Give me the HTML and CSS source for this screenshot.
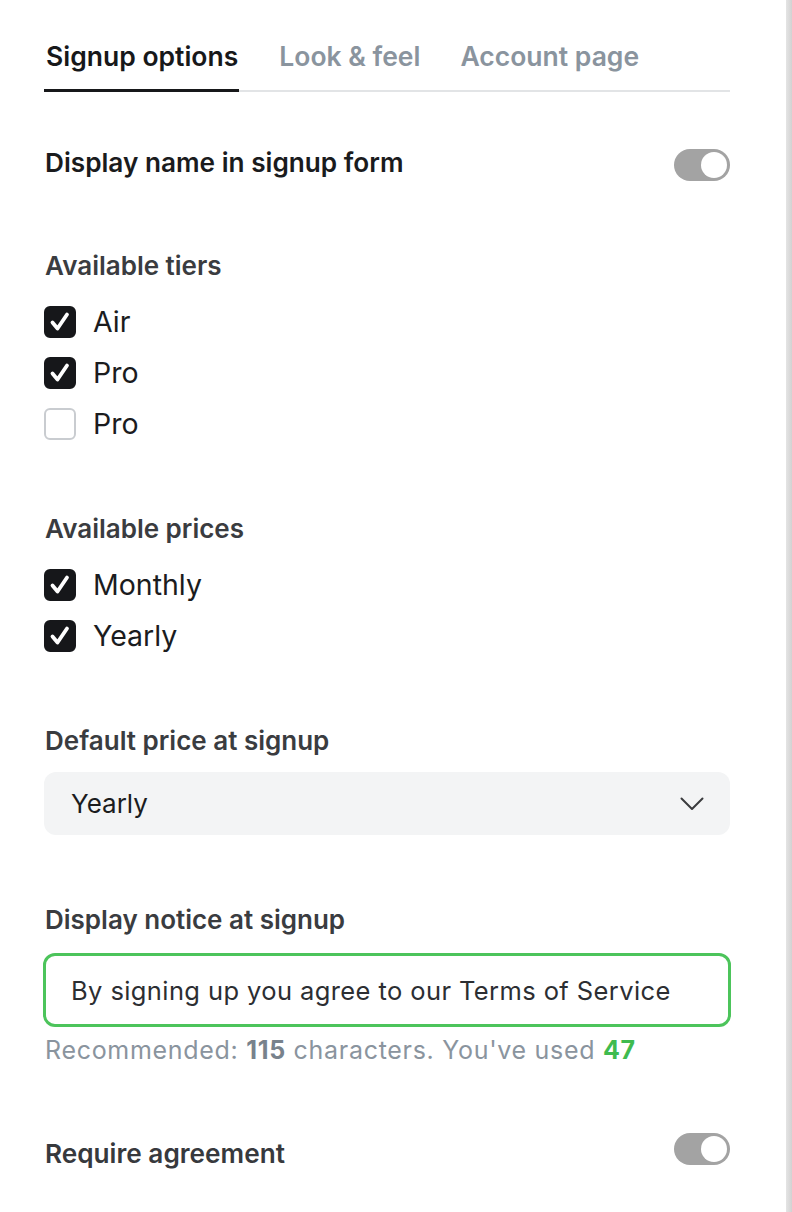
FILE: index.html
```html
<!DOCTYPE html>
<html lang="en">
<head>
<meta charset="utf-8">
<title>Signup options</title>
<link rel="stylesheet" href="styles.css">
</head>
<body>
<div class="page">
  <main class="panel">
    <nav class="tabs">
      <div class="tab active">Signup options</div>
      <div class="tab">Look &amp; feel</div>
      <div class="tab">Account page</div>
    </nav>

    <div class="toggle-row first">
      <div class="toggle-label strong">Display name in signup form</div>
      <div class="toggle"><span class="knob"></span></div>
    </div>

    <section class="group tiers">
      <h3 class="heading">Available tiers</h3>
      <div class="check-list">
        <label class="check-item"><span class="box checked"><svg viewBox="0 0 32 32"><path d="M8.5 16.5 L13.5 22.5 L23 8.5"/></svg></span><span class="item-text">Air</span></label>
        <label class="check-item"><span class="box checked"><svg viewBox="0 0 32 32"><path d="M8.5 16.5 L13.5 22.5 L23 8.5"/></svg></span><span class="item-text">Pro</span></label>
        <label class="check-item"><span class="box"></span><span class="item-text">Pro</span></label>
      </div>
    </section>

    <section class="group prices">
      <h3 class="heading">Available prices</h3>
      <div class="check-list">
        <label class="check-item"><span class="box checked"><svg viewBox="0 0 32 32"><path d="M8.5 16.5 L13.5 22.5 L23 8.5"/></svg></span><span class="item-text">Monthly</span></label>
        <label class="check-item"><span class="box checked"><svg viewBox="0 0 32 32"><path d="M8.5 16.5 L13.5 22.5 L23 8.5"/></svg></span><span class="item-text">Yearly</span></label>
      </div>
    </section>

    <section class="group default-price">
      <h3 class="heading">Default price at signup</h3>
      <div class="select">
        <span class="select-value">Yearly</span>
        <svg class="chevron" viewBox="0 0 24 14"><path d="M1.5 1.5 L12 12 L22.5 1.5"/></svg>
      </div>
    </section>

    <section class="group notice">
      <h3 class="heading">Display notice at signup</h3>
      <div class="text-input">By signing up you agree to our Terms of Service</div>
      <p class="hint">Recommended: <b class="num">115</b> characters. You've used <b class="used">47</b></p>
    </section>

    <div class="toggle-row last">
      <div class="toggle-label muted">Require agreement</div>
      <div class="toggle"><span class="knob"></span></div>
    </div>
  </main>
  <div class="scrollbar"></div>
</div>
</body>
</html>
```

FILE: styles.css
```css
* { box-sizing: border-box; }

html, body {
  margin: 0;
  padding: 0;
  background: #ffffff;
}

body {
  font-family: "Inter", "Noto Sans", "Liberation Sans", sans-serif;
  color: #1b1c1e;
  -webkit-font-smoothing: antialiased;
}

.page {
  display: flex;
  min-height: 1212px;
}

.panel {
  width: 686px;
  margin-left: 44px;
  flex: none;
}

.scrollbar {
  margin-left: auto;
  width: 6px;
  background: linear-gradient(to right, #e4e4e4, #d2d2d2);
}

/* Tabs */
.tabs {
  display: flex;
  gap: 40px;
  box-shadow: inset 0 -2px 0 #e2e4e6;
}

.tab {
  font-size: 26.5px;
  font-weight: 600;
  line-height: 30px;
  padding-top: 41px;
  padding-bottom: 21px;
  color: #8a949e;
  white-space: nowrap;
}

.tab.active {
  color: #17181a;
  padding-left: 2px;
  padding-right: 1px;
  padding-bottom: 18px;
  border-bottom: 3px solid #17181a;
}

/* Toggle rows */
.toggle-row {
  display: flex;
  justify-content: space-between;
  align-items: flex-start;
}

.toggle-row.first { margin-top: 57px; }
.toggle-row.last { margin-top: 69px; }

.toggle-label {
  font-size: 26.2px;
  font-weight: 600;
  line-height: 30px;
  margin-left: 1px;
}

.toggle-row.first .toggle-label { margin-top: -1px; }
.toggle-row.last .toggle-label { margin-top: 6px; }

.toggle-label.strong { color: #1a1b1d; }
.toggle-label.muted { color: #37393d; }

.toggle {
  width: 56px;
  height: 32px;
  border-radius: 16px;
  background: #a3a3a3;
  display: flex;
  justify-content: flex-end;
  align-items: center;
  padding: 3px;
}

.knob {
  width: 26px;
  height: 26px;
  border-radius: 50%;
  background: #ffffff;
}

/* Groups */
.group { display: flex; flex-direction: column; }

.heading {
  margin: 0;
  font-size: 26px;
  font-weight: 600;
  line-height: 30px;
  color: #3a3c40;
  margin-left: 1px;
}

.tiers { margin-top: 70px; }
.prices { margin-top: 65px; }
.default-price { margin-top: 65px; }
.notice { margin-top: 70px; }

.check-list {
  display: flex;
  flex-direction: column;
  margin-top: 15px;
}

.check-item {
  display: flex;
  align-items: center;
  height: 51px;
  gap: 17px;
}

.box {
  width: 32px;
  height: 32px;
  border-radius: 6px;
  border: 2px solid #c9ccd0;
  display: flex;
  align-items: center;
  justify-content: center;
  flex: none;
}

.box.checked {
  background: #16171a;
  border-color: #16171a;
}

.box svg {
  width: 32px;
  height: 32px;
  flex: none;
}

.box svg path {
  fill: none;
  stroke: #ffffff;
  stroke-width: 3.8;
  stroke-linecap: round;
  stroke-linejoin: round;
}

.item-text {
  font-size: 28.5px;
  line-height: 34px;
  color: #1b1c1e;
}

/* Select */
.select {
  margin-top: 16px;
  height: 63px;
  border-radius: 12px;
  background: #f3f4f5;
  display: flex;
  align-items: center;
  justify-content: space-between;
  padding: 0 26px 0 27px;
}

.select-value {
  font-size: 26px;
  color: #1b1c1e;
}

.chevron {
  width: 24px;
  height: 14px;
}

.chevron path {
  fill: none;
  stroke: #3a3b3e;
  stroke-width: 2;
  stroke-linecap: round;
  stroke-linejoin: round;
}

/* Text input */
.text-input {
  margin-top: 18px;
  margin-left: -1px;
  margin-right: -1px;
  height: 74px;
  border: 3px solid #4cc45b;
  border-radius: 12px;
  display: flex;
  align-items: center;
  padding-left: 25px;
  font-size: 25.5px;
  letter-spacing: 0.4px;
  color: #2c2e32;
  white-space: nowrap;
}

.hint {
  margin: 9px 0 0 1px;
  font-size: 25px;
  letter-spacing: 0.7px;
  line-height: 28px;
  color: #8a949e;
  white-space: nowrap;
}

.hint .num {
  font-weight: 700;
  color: #78828c;
}

.hint .used {
  font-weight: 700;
  color: #3fbb4f;
}
```
